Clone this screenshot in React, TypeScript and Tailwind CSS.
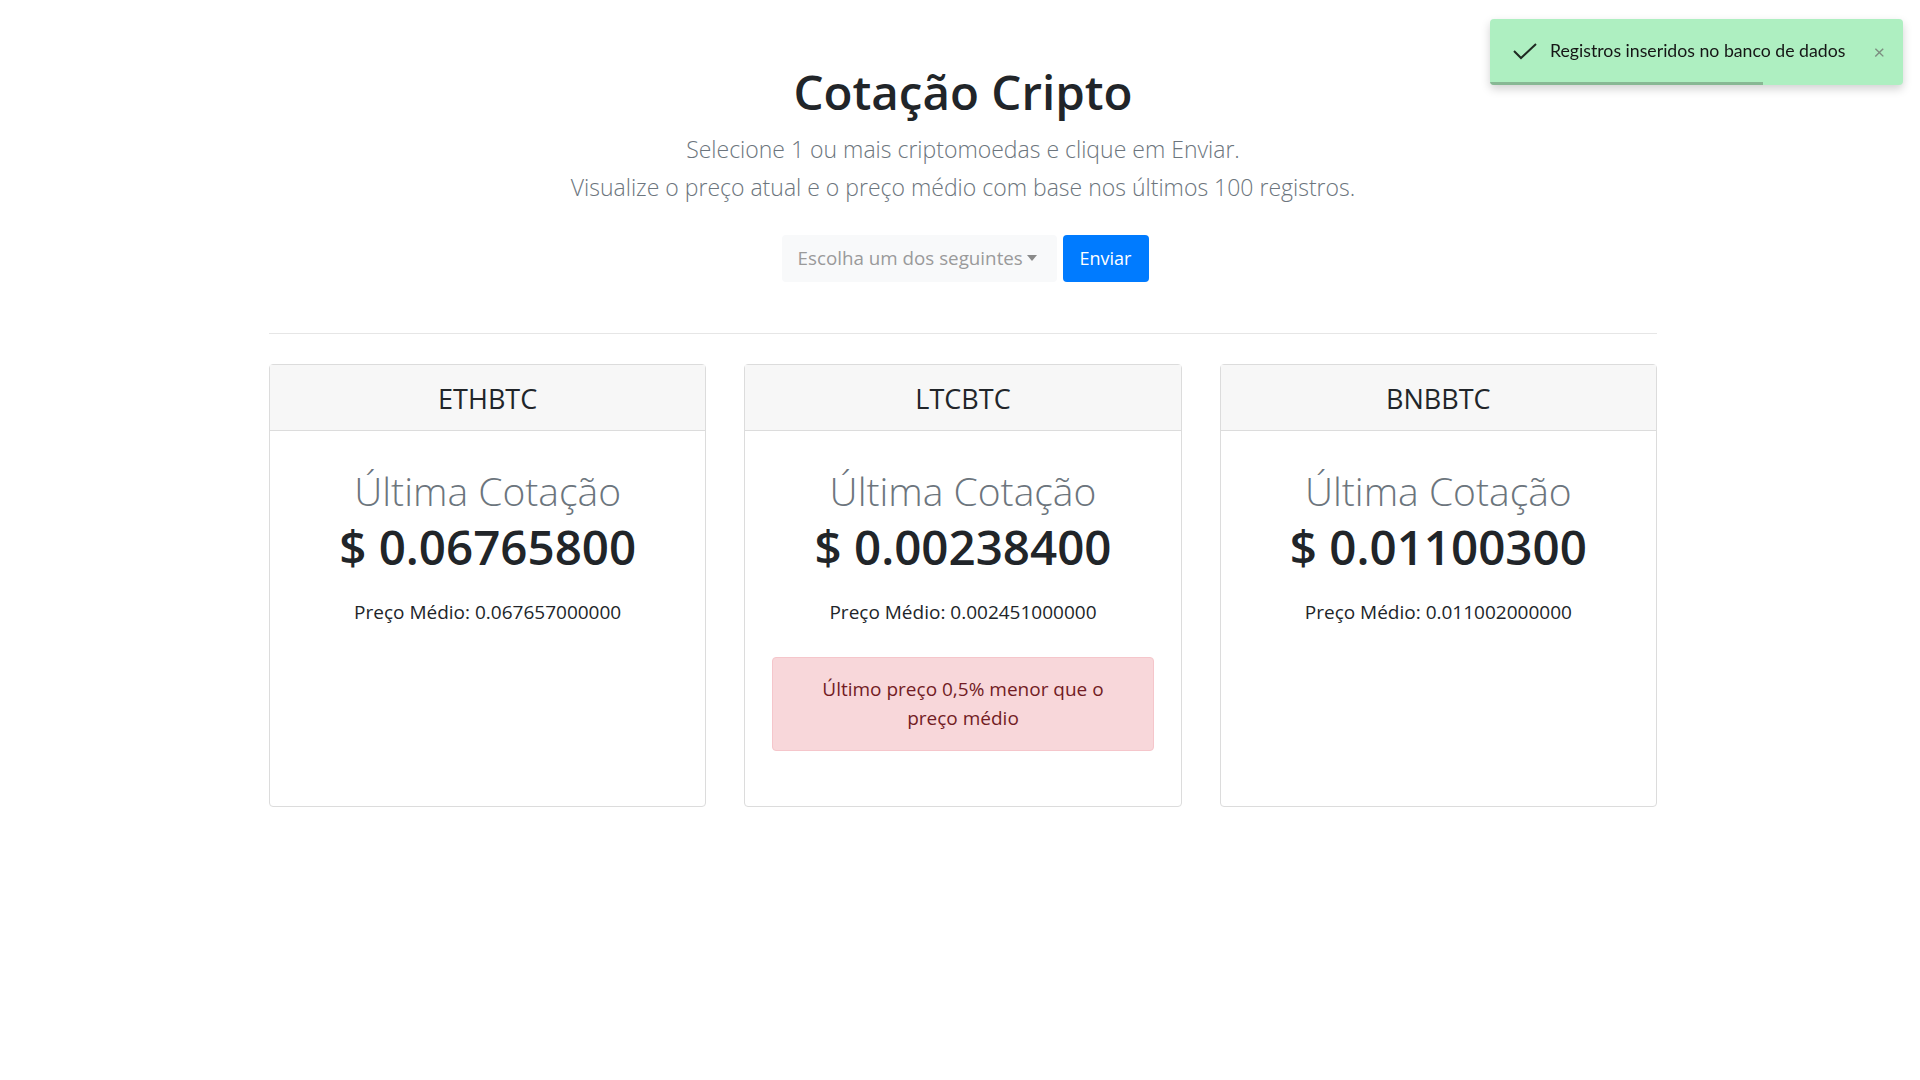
const cards = [
  { pair: "ETHBTC", last: "0.06765800", avg: "0.067657000000", alert: null },
  {
    pair: "LTCBTC",
    last: "0.00238400",
    avg: "0.002451000000",
    alert: "Último preço 0,5% menor que o preço médio",
  },
  { pair: "BNBBTC", last: "0.01100300", avg: "0.011002000000", alert: null },
];

function Toast() {
  return (
    <div className="fixed right-[17px] top-[19px] w-[413px] h-[66px] overflow-hidden rounded-[4px] bg-[#aeefc1] shadow-[0_4px_10px_rgba(0,0,0,0.18)] font-['Lato',sans-serif]">
      <div className="flex h-full items-center pl-[22px] pr-[18px] pb-[2px]">
        <svg width="26" height="20" viewBox="0 0 26 20" className="shrink-0">
          <polyline points="2,10 9,17 24,3" fill="none" stroke="#1f2a22" strokeWidth="2" />
        </svg>
        <p className="ml-[12px] flex-1 text-[17.7px] text-[#161616]">Registros inseridos no banco de dados</p>
        <span className="text-[20px] leading-none text-[#7c8e80]">×</span>
      </div>
      <div className="absolute bottom-0 left-0 h-[3px] w-[273px] bg-[#88b894]" />
    </div>
  );
}

function Card({ pair, last, avg, alert }: (typeof cards)[number]) {
  return (
    <div className="flex flex-col rounded-[4px] border border-[#dcdcdc] bg-white">
      <div className="flex h-[66px] items-center justify-center border-b border-[#dcdcdc] bg-[#f7f7f7] pt-[3px] text-[27px] text-[#212529]">
        {pair}
      </div>
      <div className="flex flex-col items-center px-[27px] pt-[36px] pb-[55px] text-center">
        <p className="text-[39px] leading-[48px] font-light text-[#6c757d]">Última Cotação</p>
        <p className="mt-[3px] text-[47.5px] leading-[58px] font-semibold text-[#212529]">$ {last}</p>
        <p className="mt-[21px] text-[19px] leading-[30px] text-[#212529]">Preço Médio: {avg}</p>
        {alert && (
          <div className="mt-[30px] w-full rounded-[4px] border border-[#f5c6cb] bg-[#f8d7da] px-[40px] py-[17px] text-[19px] leading-[29px] text-[#721c24]">
            {alert}
          </div>
        )}
      </div>
    </div>
  );
}

export default function App() {
  return (
    <div className="min-h-screen bg-white font-['Open_Sans',sans-serif] text-[#212529]">
      <Toast />
      <div className="ml-[269px] w-[1388px] pt-[64px]">
        <div className="text-center">
          <h1 className="text-[47.5px] leading-[55px] font-semibold">Cotação Cripto</h1>
          <p className="mt-[11px] text-[23px] leading-[38px] font-light text-[#6c757d]">
            Selecione 1 ou mais criptomoedas e clique em Enviar.
          </p>
          <p className="text-[23px] leading-[38px] font-light text-[#6c757d]">
            Visualize o preço atual e o preço médio com base nos últimos 100 registros.
          </p>
        </div>
        <div className="mt-[29px] flex justify-center gap-[6px] pl-[4px]">
          <button className="flex h-[47px] w-[275px] items-center rounded-[4px] bg-[#f8f9fa] pl-[16px] text-[18.8px] text-[#9a9a9a]">
            <span>Escolha um dos seguintes</span>
            <span className="ml-[4px] mb-[2px] h-0 w-0 border-x-[5px] border-t-[6px] border-x-transparent border-t-[#8a8a8a]" />
          </button>
          <button className="h-[47px] w-[86px] rounded-[4px] bg-[#007bff] text-[18px] text-white">Enviar</button>
        </div>
        <hr className="mt-[51px] border-t border-[#e6e6e6]" />
        <div className="mt-[30px] grid grid-cols-3 gap-[38px]">
          {cards.map((c) => (
            <Card key={c.pair} {...c} />
          ))}
        </div>
      </div>
    </div>
  );
}
